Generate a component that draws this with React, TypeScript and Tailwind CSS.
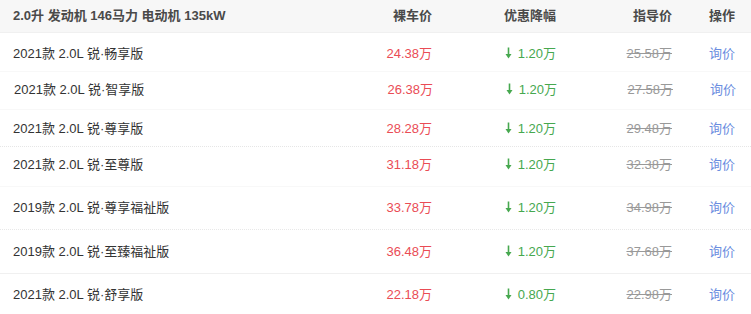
import React from "react";

const rows = [
  { name: "2021款 2.0L 锐·畅享版", price: "24.38万", cut: "1.20万", guide: "25.58万", cls: "h-[39px] pt-[11px] border-[#f8f8f8]" },
  { name: "2021款 2.0L 锐·智享版", price: "26.38万", cut: "1.20万", guide: "27.58万", cls: "h-[38px] pt-[8px] pl-[1px] border-[#f8f8f8]" },
  { name: "2021款 2.0L 锐·尊享版", price: "28.28万", cut: "1.20万", guide: "29.48万", cls: "h-[37px] pt-[9px] border-dotted border-[#e6e6e6]" },
  { name: "2021款 2.0L 锐·至尊版", price: "31.18万", cut: "1.20万", guide: "32.38万", cls: "h-[40px] pt-[8px] border-[#f8f8f8]" },
  { name: "2019款 2.0L 锐·尊享福祉版", price: "33.78万", cut: "1.20万", guide: "34.98万", cls: "h-[43px] pt-[11px] border-dotted border-[#e8e8e8]" },
  { name: "2019款 2.0L 锐·至臻福祉版", price: "36.48万", cut: "1.20万", guide: "37.68万", cls: "h-[44px] pt-[12px] border-[#f0f0f0]" },
  { name: "2021款 2.0L 锐·舒享版", price: "22.18万", cut: "0.80万", guide: "22.98万", cls: "h-[40px] pt-[11px] border-transparent" },
];

const DownArrow = () => (
  <svg width="7" height="12" viewBox="0 0 7 12" className="inline-block mr-[6px] align-[-1px]">
    <path d="M3.5 0.5 V9" stroke="#46a84f" strokeWidth="1.6" />
    <path d="M0.5 7 L3.5 11.5 L6.5 7 Z" fill="#46a84f" />
  </svg>
);

export default function App() {
  return (
    <div
      className="w-[751px] h-[314px] overflow-hidden bg-white text-[13px] leading-[20px]"
      style={{ fontFamily: '"Liberation Sans", "Noto Sans CJK SC", sans-serif' }}
    >
      {/* header */}
      <div className="grid grid-cols-[332px_100px_124px_116px_63px] h-[33px] items-center bg-[#f7f7f7] border-b border-[#f0f0f0] font-bold text-[#4a4a4a]">
        <div className="pl-[13px]">2.0升 发动机 146马力 电动机 135kW</div>
        <div className="text-right">裸车价</div>
        <div className="text-right">优惠降幅</div>
        <div className="text-right">指导价</div>
        <div className="text-right">操作</div>
      </div>

      {rows.map((r) => (
        <div
          key={r.name}
          className={`grid grid-cols-[332px_100px_124px_116px_63px] items-start border-b ${r.cls}`}
        >
          <div className="pl-[13px] text-[#333]">{r.name}</div>
          <div className="text-right text-[#ea4c55]">{r.price}</div>
          <div className="text-right text-[#46a84f]">
            <DownArrow />
            {r.cut}
          </div>
          <div className="text-right text-[#999] line-through">{r.guide}</div>
          <div className="text-right text-[#6b8de0]">询价</div>
        </div>
      ))}
    </div>
  );
}
